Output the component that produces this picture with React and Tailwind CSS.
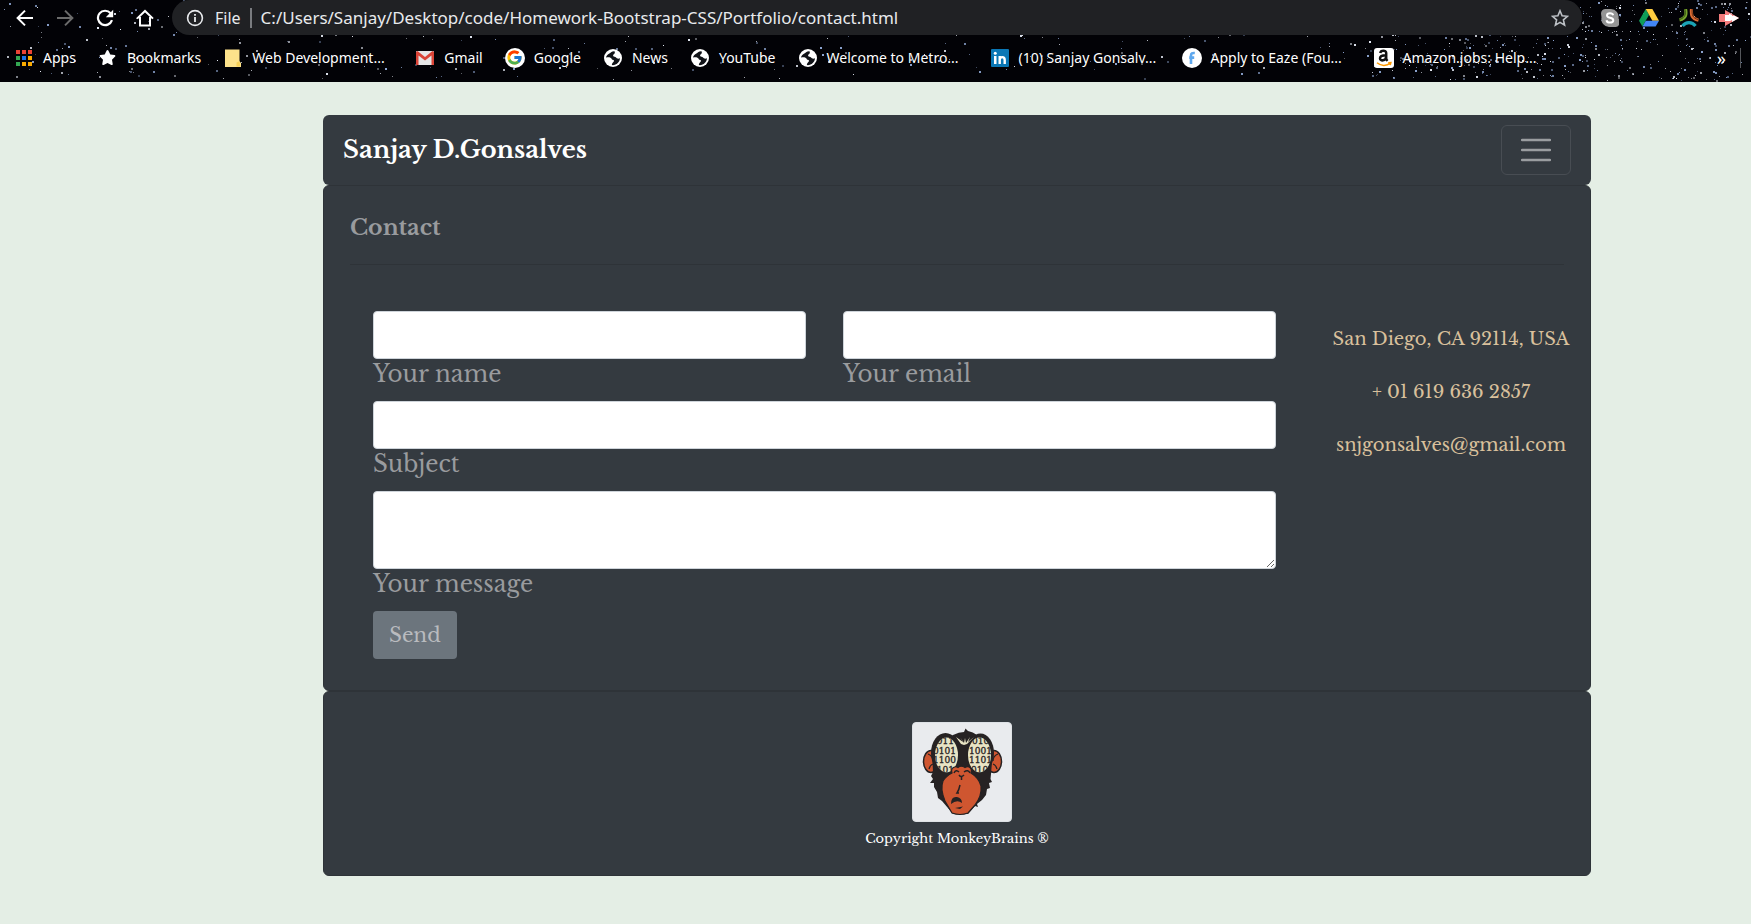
import { FaStar } from "react-icons/fa";
import { FcGoogle } from "react-icons/fc";

function makeStars(count, from, to, seed) {
  let s = seed;
  const next = () => {
    s = (s * 1664525 + 1013904223) % 4294967296;
    return s / 4294967296;
  };
  return Array.from({ length: count }, () => ({
    x: from + next() * (to - from),
    y: Math.round(next() * 80),
    size: next() > 0.6 ? 2 : 1,
    opacity: 0.35 + next() * 0.65,
    fill: next() > 0.5 ? "#8ea6d2" : "#e6ebf5",
  }));
}

const STARS = [...makeStars(380, 0, 78, 7), ...makeStars(560, 78, 100, 91)];

function StarField() {
  return (
    <svg className="absolute inset-0 h-full w-full" shapeRendering="crispEdges" aria-hidden="true">
      {STARS.map((star, i) => (
        <rect
          key={i}
          x={`${star.x}%`}
          y={star.y}
          width={star.size}
          height={star.size}
          fill={star.fill}
          opacity={star.opacity}
        />
      ))}
    </svg>
  );
}

function BackIcon() {
  return (
    <svg width="18" height="18" viewBox="0 0 18 18" fill="none" stroke="currentColor" strokeWidth="2" aria-hidden="true">
      <path d="M17 9H2M9 1.6 1.6 9 9 16.4" />
    </svg>
  );
}

function ForwardIcon() {
  return (
    <svg width="18" height="18" viewBox="0 0 18 18" fill="none" stroke="currentColor" strokeWidth="2" aria-hidden="true">
      <path d="M1 9h15M9 1.6 16.4 9 9 16.4" />
    </svg>
  );
}

function ReloadIcon() {
  return (
    <svg width="18" height="18" viewBox="0 0 18 18" aria-hidden="true">
      <path d="M14.6 4.2A7.2 7.2 0 1 0 16 11.2" fill="none" stroke="currentColor" strokeWidth="2.2" />
      <path d="M17.2.8v7.4H9.8z" fill="currentColor" />
    </svg>
  );
}

function HomeIcon() {
  return (
    <svg width="18" height="18" viewBox="0 0 18 18" fill="none" stroke="currentColor" strokeWidth="2" aria-hidden="true">
      <path d="M1 9.6 9 2l8 7.6M4 8v8.4h10V8" />
    </svg>
  );
}

function InfoIcon() {
  return (
    <svg width="18" height="18" viewBox="0 0 18 18" aria-hidden="true">
      <circle cx="9" cy="9" r="7.4" fill="none" stroke="#e8eaed" strokeWidth="1.6" />
      <path d="M9 8v5M9 5v1.8" stroke="#e8eaed" strokeWidth="1.8" />
    </svg>
  );
}

function OutlineStarIcon() {
  return (
    <svg width="18" height="18" viewBox="0 0 18 18" fill="none" stroke="#bdc1c6" strokeWidth="1.6" aria-hidden="true">
      <path d="m9 1.8 2.1 5 5.4.5-4.1 3.6 1.2 5.3L9 13.4l-4.6 2.8 1.2-5.3L1.5 7.3l5.4-.5z" />
    </svg>
  );
}

function SkypeIcon() {
  return (
    <svg width="18" height="18" viewBox="0 0 18 18" aria-hidden="true">
      <path d="M0 4.5A4.5 4.5 0 0 1 4.500 0H10a8 8 0 0 1 7.500 9.500A5 5 0 0 1 13.500 18H8A8 8 0 0 1 .5 8.500z" fill="#949494" />
      <path d="M12.200 6.200C11.800 4.800 10.600 4.300 9 4.300c-1.800 0-3 .9-3 2.200C6 9.500 12.300 8 12.300 11.200c0 1.400-1.400 2.400-3.300 2.400-1.900 0-3.200-.8-3.500-2.400" fill="none" stroke="#fff" strokeWidth="2" />
    </svg>
  );
}

function DriveIcon() {
  return (
    <svg width="20" height="18" viewBox="0 0 20 18" aria-hidden="true">
      <path d="M6.700 0 0 11.700 3.400 17.600 10 6z" fill="#0f9d58" />
      <path d="M6.700 0h6.700L20 11.700h-6.600z" fill="#ffcd40" />
      <path d="M6.800 11.700H20l-3.400 5.900H3.400z" fill="#4285f4" />
    </svg>
  );
}

function LegsIcon() {
  return (
    <svg width="20" height="18" viewBox="0 0 20 18" fill="none" aria-hidden="true">
      <g strokeWidth="3.200">
        <path d="M6.500 0C7.500 5 7.500 9 .5 11" stroke="#76a52c" />
        <path d="M12.500 0c-.5 6 0 9.500 7 11.200" stroke="#dc6c33" />
        <path d="M3.500 17c3.500-4.500 9.500-4.500 13 0" stroke="#1ba3b4" />
      </g>
      <g strokeWidth=".8">
        <path d="M5.800 0C7 5 6.500 8.500.5 10.500" stroke="#24340c" />
        <path d="M13.200 0c-.5 6 .3 9 6.300 10.700" stroke="#4a210d" />
      </g>
    </svg>
  );
}

function ArrowIcon() {
  return (
    <svg width="20" height="18" viewBox="0 0 20 18" aria-hidden="true">
      <path d="M0 5h6V1l14 8-14 8v-4H0z" fill="#f47c7c" />
      <path d="M6 6h4V4.500l3 1.500v1l2-.5L20 9l-7 4v-2l-2 1H6z" fill="#fff" />
    </svg>
  );
}

function AppsIcon() {
  const colors = ["#ea4335", "#ea4335", "#ea4335", "#34a853", "#1a73e8", "#fbab00", "#34a853", "#fbab00", "#fbab00"];
  return (
    <svg width="18" height="18" viewBox="0 0 18 18" aria-hidden="true">
      {colors.map((c, i) => (
        <rect key={i} x={1 + (i % 3) * 6} y={1 + Math.floor(i / 3) * 6} width="4" height="4" fill={c} />
      ))}
    </svg>
  );
}

function NoteIcon() {
  return (
    <svg width="16" height="18" viewBox="0 0 16 18" aria-hidden="true">
      <path d="M0 .5h14.500v11.700L16 14v4H0z" fill="#fde28b" />
      <path d="M11.500 17.500v-4l3-1.300.8 5.300z" fill="#f6cf56" />
    </svg>
  );
}

function GmailIcon() {
  return (
    <svg width="18" height="14" viewBox="0 0 18 14" aria-hidden="true">
      <rect width="18" height="14" rx="1" fill="#e6e6e6" />
      <path d="M0 14V1l1.500-1L9 6l7.500-6L18 1v13h-2.500V4.500L9 9.600 2.500 4.500V14z" fill="#db4437" />
    </svg>
  );
}

function GoogleIcon() {
  return (
    <span className="flex size-5 items-center justify-center rounded-full bg-white">
      <FcGoogle size={17} />
    </span>
  );
}

function GlobeIcon() {
  return (
    <svg width="18" height="18" viewBox="0 0 18 18" aria-hidden="true">
      <circle cx="9" cy="9" r="9" fill="#fff" />
      <path d="M10.500 2.200C7.600 2 7.200 3.600 5.400 4.500 3.800 5.300 2 7.200 2 8.500c2.600-.6 5.200-.2 5.600 1.300.3 1.500 2.600.9 2.400 2.300-.2 1.300-2 1.500-2.200 4 4.400.5 8-2.800 8.200-6.800-1.600.9-3.300.3-3.900-.7-.7-1.200-3.100-.5-3-2.100C9.200 4.800 11.800 5 10.500 2.200z" fill="#111318" />
    </svg>
  );
}

function LinkedInIcon() {
  return (
    <svg width="18" height="18" viewBox="0 0 18 18" aria-hidden="true">
      <rect width="18" height="18" rx="1" fill="#0a77b5" />
      <rect x="3" y="7" width="2.500" height="8" fill="#fff" />
      <circle cx="4.250" cy="4.300" r="1.500" fill="#fff" />
      <path d="M8.700 15V7M8.700 11c0-3.800 5-3.800 5 0v4" fill="none" stroke="#fff" strokeWidth="2.400" />
    </svg>
  );
}

function FacebookStyleIcon() {
  return (
    <svg width="20" height="20" viewBox="0 0 20 20" aria-hidden="true">
      <circle cx="10" cy="10" r="10" fill="#fff" />
      <path d="M9 16V7.500C9 5.300 10.200 4.800 12.800 5M7.200 9.600h5" fill="none" stroke="#5fa8ee" strokeWidth="2.600" />
    </svg>
  );
}

function AmazonIcon() {
  return (
    <svg width="20" height="20" viewBox="0 0 20 20" aria-hidden="true">
      <rect width="20" height="20" rx="3" fill="#fff" />
      <path d="M6.200 5C6.800 2 12.200 1.800 12.200 5v5.200c0 1.200.5 1.900 1.400 2.700M12 7.200c-4 0-6 1-6 3.100 0 3.300 6 2.500 6-1.300" fill="none" stroke="#111" strokeWidth="2.500" />
      <path d="M3 14.800c4 3.400 9.500 3.400 13.500.4M14.200 14.700l2.700-.2-.7 2.600" fill="none" stroke="#f90" strokeWidth="1.500" />
    </svg>
  );
}

const BOOKMARKS = [
  { label: "Apps", icon: <AppsIcon /> },
  { label: "Bookmarks", icon: <FaStar size={17} color="#fff" /> },
  { label: "Web Development...", icon: <NoteIcon />, clipped: true },
  { label: "Gmail", icon: <GmailIcon /> },
  { label: "Google", icon: <GoogleIcon /> },
  { label: "News", icon: <GlobeIcon /> },
  { label: "YouTube", icon: <GlobeIcon /> },
  { label: "Welcome to Metro...", icon: <GlobeIcon />, clipped: true },
  { label: "(10) Sanjay Gonsalv...", icon: <LinkedInIcon />, clipped: true },
  { label: "Apply to Eaze (Fou...", icon: <FacebookStyleIcon />, clipped: true },
  { label: "Amazon.jobs: Help...", icon: <AmazonIcon />, clipped: true },
];

function BrowserBar() {
  return (
    <header className="relative overflow-hidden bg-[#020206] font-['Noto_Sans',sans-serif] text-white">
      <StarField />
      <div className="relative flex h-[35px] items-center pl-4">
        <nav aria-label="Browser" className="flex w-[156px] items-center gap-[22px]">
          <button type="button" aria-label="Back"><BackIcon /></button>
          <button type="button" aria-label="Forward" className="text-[#6b6b6b]"><ForwardIcon /></button>
          <button type="button" aria-label="Reload"><ReloadIcon /></button>
          <button type="button" aria-label="Home"><HomeIcon /></button>
        </nav>
        <div className="flex h-full min-w-0 flex-1 items-center rounded-full bg-[#202124] pr-[13px] pl-[14px]">
          <InfoIcon />
          <span className="ml-[11px] text-base text-[#e8eaed]">File</span>
          <span className="mx-[9px] h-5 w-[2px] bg-[#7a7c80]" />
          <input
            aria-label="Address"
            readOnly
            value="C:/Users/Sanjay/Desktop/code/Homework-Bootstrap-CSS/Portfolio/contact.html"
            className="h-full min-w-0 flex-1 bg-transparent text-[17px] text-[#e8eaed] outline-none"
          />
          <button type="button" aria-label="Bookmark this page"><OutlineStarIcon /></button>
        </div>
        <div className="flex items-center gap-5 pr-3 pl-[19px]">
          <button type="button" aria-label="Skype"><SkypeIcon /></button>
          <button type="button" aria-label="Drive"><DriveIcon /></button>
          <button type="button" aria-label="Extension"><LegsIcon /></button>
          <button type="button" aria-label="Recorder"><ArrowIcon /></button>
        </div>
      </div>
      <div className="relative flex h-[47px] items-center pr-[10px] pb-[2px] pl-[14px]">
        <nav aria-label="Bookmarks" className="flex flex-1 items-center gap-[22px]">
          {BOOKMARKS.map(({ label, icon, clipped }) => (
            <a key={label} href="#" className="flex shrink-0 items-center gap-[9px] text-sm whitespace-nowrap">
              <span className="flex w-5 justify-center">{icon}</span>
              <span className={clipped ? "w-[141px]" : ""}>{label}</span>
            </a>
          ))}
        </nav>
        <button type="button" aria-label="More bookmarks" className="pr-[14px] text-lg leading-5">»</button>
        <span className="h-5 w-px bg-[#55575c]" />
      </div>
    </header>
  );
}

function MonkeyLogo() {
  return (
    <svg className="ml-[10px] size-[100px] rounded border border-[#dee2e6] bg-[#e9ebee]" viewBox="1 1 98 98" role="img" aria-label="MonkeyBrains">
      <defs>
        <clipPath id="leftEye"><ellipse cx="34.500" cy="33" rx="11.500" ry="17.500" /></clipPath>
        <clipPath id="rightEye"><ellipse cx="67.500" cy="33" rx="11.500" ry="17.500" /></clipPath>
      </defs>
      <g fill="#cf5630" stroke="#262223" strokeWidth="1.500">
        <ellipse cx="19" cy="39.500" rx="7.500" ry="11" />
        <ellipse cx="82" cy="39.500" rx="7.500" ry="11" />
      </g>
      <path d="M16 32q5 2 5 7m-4 8q1-4 4-5M86 32q-5 2-5 7m4 8q-1-4-4-5" fill="none" stroke="#262223" strokeWidth="1.300" />
      <path d="M41 13Q47 10 52 10L53.500 6.500 56 9Q61 10 65 13L80 40 79 52 78.500 57 80 60 77 61 78 66 75 67 74 73 70 78 65 82 66 85 63 84 56 92H41L30 79 26 76 25 70 22 65 22 61 18 61 21 57 19 54 21 50 20 30z" fill="#262223" />
      <ellipse cx="33.500" cy="31" rx="14.500" ry="20" fill="#262223" />
      <ellipse cx="68.500" cy="31" rx="13.500" ry="19.500" fill="#262223" />
      <ellipse cx="34.500" cy="33" rx="11.500" ry="17.500" fill="#e8e4c4" />
      <ellipse cx="67.500" cy="33" rx="11.500" ry="17.500" fill="#e8e4c4" />
      <g fill="#262223" stroke="#262223" strokeWidth=".3" fontFamily="DejaVu Serif, serif" fontSize="9">
        <g clipPath="url(#leftEye)" textAnchor="end">
          <text x="42" y="22">1011</text><text x="44" y="31.500">0101</text><text x="44" y="41">1100</text><text x="42" y="50.500">0101</text>
        </g>
        <g clipPath="url(#rightEye)">
          <text x="60" y="22">0101</text><text x="57" y="31.500">1001</text><text x="57" y="41">1101</text><text x="59" y="50.500">0101</text>
        </g>
      </g>
      <path d="M44 15l7 5-3-5 4 6 1-5 1 5 4-6-2 5 6-5-7 7-3 1-3-1z" fill="#e8e4c4" />
      <path d="M40 51C38 45 44 44 46 45.500Q49 43 53 45.500C57 43 61 47 59 51Q67 56 69 64 70 74 63 83L56 91Q48 94 40 91L33 79Q28 67 31 59 34 54 40 51z" fill="#cf5630" stroke="#262223" strokeWidth="1.200" />
      <path d="M42 51q2-4 5-1m5 0q4-3 6 1M47 53q2 3 5 0m-2.500 1v4M48 63q-1 5-3 8h2" fill="none" stroke="#262223" strokeWidth="1.500" />
      <path d="M39 82Q39 74 45 75 50 76 50 81 45 77 39 82zM43 86l8-1.500-3 2.500z" fill="#262223" />
    </svg>
  );
}

const fieldClass = "block h-12 w-full rounded border border-[#ced4da] bg-white px-4 text-xl text-[#495057]";
const labelClass = "mb-3 block text-[23px] leading-[30px]";

function ContactForm() {
  return (
    <form className="min-w-0 flex-1" onSubmit={(e) => e.preventDefault()}>
      <div className="grid grid-cols-2 gap-[37px]">
        <div>
          <input id="name" type="text" className={fieldClass} />
          <label htmlFor="name" className={labelClass}>Your name</label>
        </div>
        <div>
          <input id="email" type="text" className={fieldClass} />
          <label htmlFor="email" className={labelClass}>Your email</label>
        </div>
      </div>
      <input id="subject" type="text" className={fieldClass} />
      <label htmlFor="subject" className={labelClass}>Subject</label>
      <textarea id="message" className="block h-[78px] w-full resize-y rounded border border-[#ced4da] bg-white px-4 py-2 text-xl text-[#495057]" />
      <label htmlFor="message" className={labelClass}>Your message</label>
      <button type="submit" className="h-12 rounded bg-[#6c757d] px-4 text-xl text-[#b9bbbf]">Send</button>
    </form>
  );
}

export default function App() {
  return (
    <div className="min-h-screen bg-[#e4eee5] font-['Libre_Baskerville','Liberation_Serif',serif]">
      <BrowserBar />
      <main className="mt-[33px] mr-40 ml-[323px] pb-12">
        <nav className="flex h-[70px] items-center justify-between rounded-md bg-[#343a40] px-5">
          <a href="#" className="text-2xl font-bold text-white">Sanjay D.Gonsalves</a>
          <button type="button" aria-label="Toggle navigation" className="flex h-[50px] w-[70px] items-center justify-center rounded-md border border-[#484d53]">
            <svg width="30" height="24" viewBox="0 0 30 24" aria-hidden="true">
              <path d="M1 2h28M1 12h28M1 22h28" stroke="#9a9da0" strokeWidth="2.500" strokeLinecap="round" />
            </svg>
          </button>
        </nav>

        <section className="rounded-md border border-[#2e3338] bg-[#343a40] px-[26px] pb-[31px] text-[#999b9e]">
          <h1 className="border-b border-[#2e3338] pt-[26px] pb-5 text-[22px] leading-8 font-bold">Contact</h1>
          <div className="flex pt-[46px] pl-[23px]">
            <ContactForm />
            <address className="-mr-[26px] w-[314px] shrink-0 space-y-[23px] pt-[13px] pl-9 text-center text-lg leading-[30px] text-[#d9c09c] not-italic">
              <p>San Diego, CA 92114, USA</p>
              <p>+ 01 619 636 2857</p>
              <p><a href="#">snjgonsalves@gmail.com</a></p>
            </address>
          </div>
        </section>

        <footer className="flex flex-col items-center rounded-md border border-[#2e3338] bg-[#343a40] pt-[30px] pb-[23px] text-white">
          <MonkeyLogo />
          <p className="mt-1 text-[13px] leading-[26px]">Copyright MonkeyBrains ®</p>
        </footer>
      </main>
    </div>
  );
}
